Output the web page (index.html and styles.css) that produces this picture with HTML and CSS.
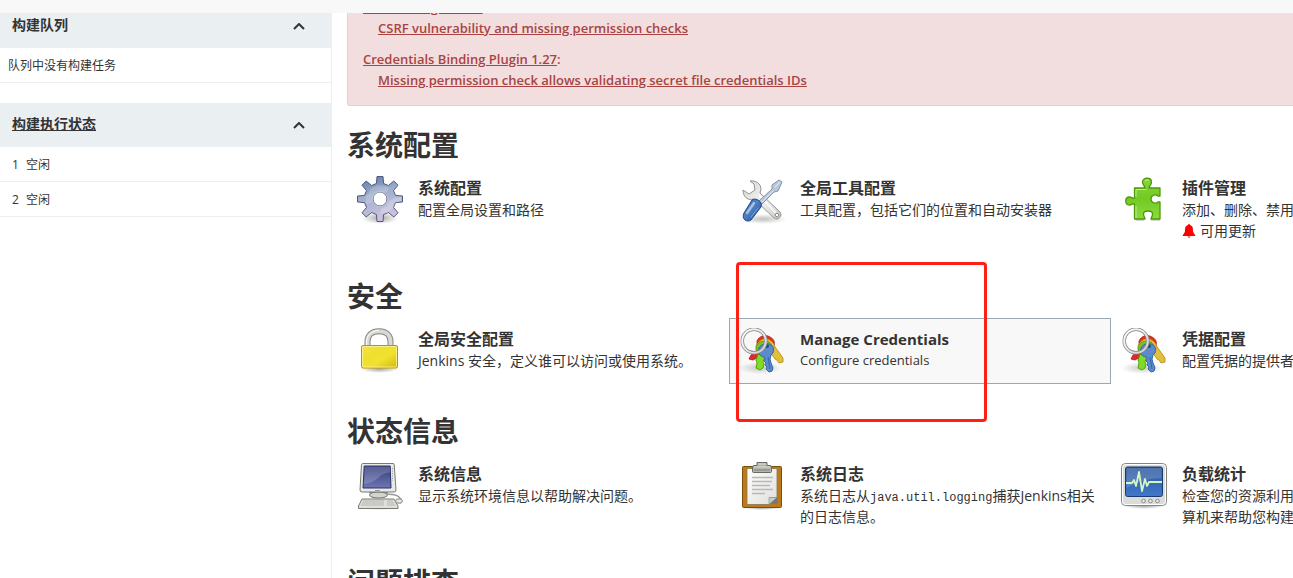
FILE: index.html
```html
<!DOCTYPE html>
<html lang="zh-CN">
<head>
<meta charset="utf-8">
<title>系统管理 [Jenkins]</title>
<link rel="stylesheet" href="styles.css">
</head>
<body>
<svg class="defs" aria-hidden="true">
  <defs>
    <linearGradient id="ring" x1="0" y1="0" x2="1" y2="1"><stop offset="0" stop-color="#fff"/><stop offset="1" stop-color="#cfcfcf"/></linearGradient>
    <radialGradient id="shade"><stop offset="0" stop-color="#000" stop-opacity=".35"/><stop offset="1" stop-color="#000" stop-opacity="0"/></radialGradient>
  </defs>
  <symbol id="keys" viewBox="0 0 48 48">
    <ellipse cx="21" cy="40" rx="21" ry="6" fill="url(#shade)" opacity=".6"/>
    <path d="M20 22l-8 5-2 4 4 1 11-6z" fill="#e0282e" stroke="#b81414" stroke-width=".8"/>
    <path d="M18 13c2-5 8-7 13-4 4 2 5 5 4 9l-6-3-11 4z" fill="#d8391f" stroke="#b81414" stroke-width=".8"/>
    <path d="M30 18l4-2 10 14v4l-4 1-2-3-2-1-2-3-5-6z" fill="#e3c03c" stroke="#b8921a" stroke-width=".9"/>
    <path d="M18 16c3-5 9-7 14-3 3 2 4 5 2 9l-5-5-10 3z" fill="#f0c637" stroke="#c17d11" stroke-width=".6"/>
    <path d="M17 18c3-5 9-6 13-4 3 2 4 5 3 8l-9 5-7-5z" fill="#73c91f" stroke="#4e9a06" stroke-width=".8"/>
    <path d="M19 26l-2 6 1 3-1 5 4 2 3-2 1-4-1-2 2-6z" fill="#7fdc24" stroke="#4e9a06" stroke-width=".9"/>
    <path d="M20 20c2-4 8-6 12-3 4 3 3 8 0 10l-1 4 1 4 2 5-1 3-3 1-3-3 1-2-2-2 1-2-2-2 1-2-1-2c-5-1-7-5-5-9z" fill="#5a8bcd" stroke="#3465a4"/>
    <path d="M29 29l2 12" stroke="#3465a4" stroke-width="1"/>
    <ellipse cx="27" cy="18" rx="3" ry="2" fill="#284f73"/>
    <circle cx="15" cy="13" r="11.8" fill="none" stroke="#858585" stroke-width="3.400"/>
    <circle cx="15" cy="13" r="11.8" fill="none" stroke="url(#ring)" stroke-width="2"/>
  </symbol>
</svg>

<div class="topbar"></div>
<div class="page">
  <aside class="side-panel">
    <section class="pane">
      <header class="pane-header">
        <h2 class="pane-title">构建队列</h2>
        <button class="collapse" aria-label="收起构建队列"><svg viewBox="0 0 12 7"><path d="M1 6l5-5 5 5"/></svg></button>
      </header>
      <p class="pane-row">队列中没有构建任务</p>
    </section>
    <section class="pane">
      <header class="pane-header">
        <h2 class="pane-title"><a href="#computer">构建执行状态</a></h2>
        <button class="collapse" aria-label="收起构建执行状态"><svg viewBox="0 0 12 7"><path d="M1 6l5-5 5 5"/></svg></button>
      </header>
      <table class="executors">
        <tr><td class="number">1</td><td>空闲</td></tr>
        <tr><td class="number">2</td><td>空闲</td></tr>
      </table>
    </section>
  </aside>

  <main class="main-panel">
    <dl class="alert">
      <dt><a href="#docker">Docker Plugin 1.1.6</a>:</dt>
      <dd><a href="#csrf">CSRF vulnerability and missing permission checks</a></dd>
      <dt><a href="#binding">Credentials Binding Plugin 1.27</a>:</dt>
      <dd><a href="#permission">Missing permission check allows validating secret file credentials IDs</a></dd>
    </dl>

    <section class="category">
      <h1 class="category-title">系统配置</h1>
      <div class="items">
        <a class="item" href="#configure">
          <svg class="icon" viewBox="0 0 48 48">
            <defs><linearGradient id="gear" x1="0" y1="0" x2=".3" y2="1"><stop offset="0" stop-color="#5670a2"/><stop offset=".45" stop-color="#9dafcd"/><stop offset="1" stop-color="#cdc2df"/></linearGradient></defs>
            <ellipse cx="23" cy="41" rx="18" ry="6" fill="url(#shade)"/>
            <g transform="translate(23 22)">
              <path fill="url(#gear)" stroke="#515a78" stroke-linejoin="round" fill-rule="evenodd" d="M-3.6-15.5L-3-22.5H3L3.6-15.5 8.4-13.5 13.8-18 18-13.8 13.5-8.4 15.5-3.6 22.5-3V3L15.5 3.6 13.5 8.4 18 13.8 13.8 18 8.4 13.5 3.6 15.5 3 22.5H-3L-3.6 15.5-8.4 13.5-13.8 18-18 13.8-13.5 8.4-15.5 3.6-22.5 3V-3L-15.5-3.6-13.5-8.4-18-13.8-13.8-18-8.4-13.5zM7 0A7 7 0 1 0-7 0 7 7 0 1 0 7 0z"/>
              <path d="M-14-3l3-3 2-5 7-3 5 1 6 1-2 5-6 1A7 7 0 0 0-7 0l-2 4-5 1z" fill="#fff" opacity=".18"/>
              <path d="M9 2l5-3 7-1v4l-6 2-2 5-6 5-7 1 1-5 6-3z" fill="#fff" opacity=".22"/>
              <circle r="7.5" fill="none" stroke="#eef0f7" stroke-width=".8" opacity=".6"/>
            </g>
          </svg>
          <dl class="item-text"><dt>系统配置</dt><dd>配置全局设置和路径</dd></dl>
        </a>
        <a class="item" href="#tools">
          <svg class="icon" viewBox="0 0 48 48">
            <defs><linearGradient id="steel" x1="0" y1="0" x2="1" y2="1"><stop offset="0" stop-color="#d2d2d0"/><stop offset=".5" stop-color="#f3f3f2"/><stop offset="1" stop-color="#c9cac7"/></linearGradient>
            <linearGradient id="handle" x1="0" y1="0" x2="1" y2="1"><stop offset="0" stop-color="#3465a4"/><stop offset=".45" stop-color="#4f80c4"/><stop offset="1" stop-color="#204a87"/></linearGradient></defs>
            <ellipse cx="24" cy="42" rx="24" ry="5" fill="url(#shade)" opacity=".7"/>
            <path d="M11 4c6-1 11 3 11 8l-1 4 20 19c3 4-2 9-6 6L15 22C9 24 4 20 4 13l6 4 6-4-1-6z" fill="url(#steel)" stroke="#92948f" stroke-linejoin="round"/>
            <path d="M20 18l17 18" stroke="#fff" stroke-width="2" opacity=".7"/>
            <circle cx="38" cy="38" r="1.800" fill="#fff" stroke="#888"/>
            <path d="M20 24L33 12V8l7-5 3 2-4 9-4 1-12 12z" fill="#b9c9da" stroke="#8393a7" stroke-linejoin="round"/>
            <path d="M36 10l5-5M23 25l11-11" stroke="#e3ebf3" stroke-width="1"/>
            <path d="M13 23c4-3 11 2 9 7L12 43c-4 3-10-1-7-7z" fill="url(#handle)" stroke="#204a87"/>
            <path d="M15 26L8 36" stroke="#a4c1e8" stroke-width="2.500" stroke-linecap="round"/>
            <path d="M19 31l-7 9" stroke="#7ea5da" stroke-width="1" stroke-linecap="round"/>
          </svg>
          <dl class="item-text"><dt>全局工具配置</dt><dd>工具配置，包括它们的位置和自动安装器</dd></dl>
        </a>
        <a class="item" href="#plugins">
          <svg class="icon" viewBox="0 0 48 48">
            <defs><linearGradient id="puzzle" x1="0" y1="0" x2="0" y2="1"><stop offset="0" stop-color="#88d63c"/><stop offset=".5" stop-color="#73c923"/><stop offset="1" stop-color="#8bdc3f"/></linearGradient></defs>
            <path d="M15 43h8M30 43h9" stroke="#aaa" stroke-width="2" opacity=".5"/>
            <path d="M13.500 11H24c0-2-2.500-3-2.500-6 0-5 9-5 9 0 0 3-2.500 4-2.500 6h11v8h-2c-2-2-7-1-7 3s5 5 7 3h2v17H30c0-2 1.500-2 1.500-5 0-4-9-4-9 0 0 3 1.500 3 1.500 5H13.500V27c-2-1-3 1-5 1-5 0-5-8 0-8 2 0 3 2 5 1z" fill="url(#puzzle)" stroke="#4e9a06" stroke-width="1.300" stroke-linejoin="round"/>
            <path d="M15 20v-7.500h10M15 41V29M24 4c1-1.500 3-1.500 4-.5" fill="none" stroke="#c6f09a" stroke-width=".9"/>
          </svg>
          <dl class="item-text"><dt>插件管理</dt><dd>添加、删除、禁用或启用 Jenkins 功能的插件。</dd>
          <dd class="update"><svg class="bell" viewBox="0 0 14 14"><path d="M7 0c1 0 1 1 1 1 3 1 3 3 3 6 0 2 2 3 2.500 5h-13C1 10 3 9 3 7c0-3 0-5 3-6 0 0 0-1 1-1zM5.500 12.500h3Q7 15 5.500 12.500z"/></svg>可用更新</dd></dl>
        </a>
      </div>
    </section>

    <section class="category">
      <h1 class="category-title">安全</h1>
      <div class="items">
        <a class="item" href="#security">
          <svg class="icon" viewBox="0 0 48 48">
            <defs><linearGradient id="brass" x1="0" y1="0" x2="1" y2="1"><stop offset="0" stop-color="#f6e04a"/><stop offset=".4" stop-color="#eee02c"/><stop offset=".6" stop-color="#f1e22f"/><stop offset="1" stop-color="#d5b60c"/></linearGradient></defs>
            <ellipse cx="22.500" cy="41" rx="19" ry="4" fill="url(#shade)"/>
            <path d="M10.500 19v-5.500C10.500 7 15 3.200 22 3.200S33.500 7 33.500 13.500V19" fill="none" stroke="#858782" stroke-width="6"/>
            <path d="M10.500 19v-5.500C10.500 7 15 3.200 22 3.200S33.500 7 33.500 13.500V19" fill="none" stroke="#d7d9d4" stroke-width="4"/>
            <path d="M9.500 18v-5C10 7 15 2.500 22 2.500" fill="none" stroke="#fff" stroke-width="1"/>
            <rect x="4.500" y="17.500" width="36" height="22.500" rx="1.500" fill="url(#brass)" stroke="#b59800"/>
            <rect x="5.500" y="18.500" width="34" height="20.500" rx="1" fill="none" stroke="#fbf3a0" stroke-width=".8"/>
          </svg>
          <dl class="item-text"><dt>全局安全配置</dt><dd>Jenkins 安全，定义谁可以访问或使用系统。</dd></dl>
        </a>
        <a class="item active" href="#credentials">
          <svg class="icon"><use href="#keys"/></svg>
          <dl class="item-text latin"><dt>Manage Credentials</dt><dd>Configure credentials</dd></dl>
          <span class="highlight"></span>
        </a>
        <a class="item" href="#providers">
          <svg class="icon"><use href="#keys"/></svg>
          <dl class="item-text"><dt>凭据配置</dt><dd>配置凭据的提供者和类型</dd></dl>
        </a>
      </div>
    </section>

    <section class="category">
      <h1 class="category-title">状态信息</h1>
      <div class="items">
        <a class="item" href="#info">
          <svg class="icon" viewBox="0 0 48 48">
            <defs><linearGradient id="screen" x1="0" y1="0" x2="0" y2="1"><stop offset="0" stop-color="#343a79"/><stop offset="1" stop-color="#6e77b3"/></linearGradient></defs>
            <ellipse cx="22" cy="44" rx="21" ry="3" fill="url(#shade)"/>
            <path d="M12 28h19l-3 6H15z" fill="#a9aca5" stroke="#777a73"/>
            <ellipse cx="21.500" cy="32" rx="9" ry="3" fill="#d3d5cf" stroke="#777a73"/>
            <path d="M30 31c6 1 9 0 12 3s3 5 1 6" fill="none" stroke="#999" stroke-width="1.400"/>
            <path d="M6 .500h30q1 0 1.200 1L39 27q0 2-2 2H5q-2 0-2-2L4.500 1.500Q5 .500 6 .500z" fill="#e9eae6" stroke="#777a73"/>
            <path d="M7.200 3h26L34 25H6z" fill="url(#screen)" stroke="#27306d"/>
            <path d="M7.500 3.500H33l.2 6Q25 10 21 15 16 20 7 21z" fill="#fff" opacity=".18"/>
            <path d="M35.500 5v13" stroke="#999" stroke-dasharray="1 1.500"/><path d="M18 27.500h5" stroke="#999"/>
            <path d="M5 36h32l4 7v2.500H1.500V43z" fill="#dfe0dc" stroke="#777a73" stroke-linejoin="round"/>
            <path d="M6 38h21M5 40h22M4 42h23M30 38h6M30 40h7M30 42h8" stroke="#b4b6b1" stroke-width="1"/>
            <ellipse cx="42" cy="38" rx="3.500" ry="2.200" fill="#e5e6e2" stroke="#888"/>
          </svg>
          <dl class="item-text"><dt>系统信息</dt><dd>显示系统环境信息以帮助解决问题。</dd></dl>
        </a>
        <a class="item" href="#log">
          <svg class="icon" viewBox="0 0 48 48">
            <defs><linearGradient id="paper" x1="0" y1="0" x2="1" y2="1"><stop offset="0" stop-color="#fff"/><stop offset="1" stop-color="#dededc"/></linearGradient></defs>
            <ellipse cx="23" cy="45" rx="19" ry="2" fill="url(#shade)"/>
            <rect x="3.500" y="3.500" width="39" height="41" rx="1" fill="#bd7a1c" stroke="#7d4c05"/>
            <path d="M8 5.500h30v29l-7 7H8z" fill="url(#paper)" stroke="#8a734e" stroke-width=".8"/>
            <path d="M31 41v-6.500h7.500V41z" fill="#777974"/><path d="M30 34.500h8l-8 7z" fill="#c9cbc6" stroke="#777" stroke-width=".5"/>
            <path d="M13 14.500h21M13 18.500h20M13 22.500h18M13 26.500h21M13 30.500h13" stroke="#b8b8b5" stroke-width="1.400"/>
            <path d="M13.500 4q0-1.500 1.500-1.500h3V-.5h10v3h3q1.500 0 1.500 1.500v4.500q0 1-1 1h-17q-1 0-1-1z" fill="#b2b5ac" stroke="#686b62"/>
            <path d="M15 4h16M19 1h8" stroke="#dcded8"/><path d="M15 7h16" stroke="#92958b" stroke-width="1.500"/>
          </svg>
          <dl class="item-text"><dt>系统日志</dt><dd>系统日志从<code>java.util.logging</code>捕获Jenkins相关的日志信息。</dd></dl>
        </a>
        <a class="item" href="#load">
          <svg class="icon" viewBox="0 0 48 48">
            <defs><linearGradient id="blue" x1="0" y1="0" x2="0" y2="1"><stop offset="0" stop-color="#2c579b"/><stop offset="1" stop-color="#3f78cb"/></linearGradient></defs>
            <ellipse cx="23" cy="43" rx="21" ry="3" fill="url(#shade)"/>
            <rect x=".5" y=".5" width="45" height="42" rx="4" fill="#dcddd9" stroke="#82847f"/>
            <rect x="1.500" y="1.500" width="43" height="40" rx="3" fill="none" stroke="#fff"/>
            <rect x="4.500" y="4" width="37" height="29.500" rx="2" fill="url(#blue)" stroke="#173b72"/>
            <path d="M5.500 5h35v10Q22 15 5.500 25z" fill="#fff" opacity=".17"/>
            <path d="M5 20h6l2-3 2 6 3-14 3 19 3-12 2 7 2-4h13" fill="none" stroke="#d5f5c5" stroke-width="1.800" stroke-linejoin="round"/>
            <g fill="#eee" stroke="#888"><circle cx="22.500" cy="38" r="1.800"/><circle cx="29.500" cy="38" r="1.800"/><circle cx="36.500" cy="38" r="1.800"/></g>
          </svg>
          <dl class="item-text"><dt>负载统计</dt><dd>检查您的资源利用情况，看看是否需要更多的计算机来帮助您构建。</dd></dl>
        </a>
      </div>
    </section>

    <section class="category">
      <h1 class="category-title">问题排查</h1>
    </section>
  </main>
</div>
</body>
</html>
```
FILE: styles.css
```css
* { box-sizing: border-box; }
body {
  margin: 0;
  height: 100vh;
  display: flex;
  flex-direction: column;
  overflow: hidden;
  background: #fff;
  color: #333;
  font: 14px/21px "Open Sans", "Noto Sans CJK SC", sans-serif;
}
h1, h2, p, dl, dd { margin: 0; }
a { color: inherit; }
.defs { position: absolute; width: 0; height: 0; }

.topbar { flex: none; height: 13px; background: #f8f8f8; }
.page { flex: 1; min-height: 0; display: flex; overflow: hidden; }

.side-panel {
  flex: none;
  width: 332px;
  border-right: 1px solid #eaeff2;
  font-size: 12px;
}
.pane { margin-bottom: 20px; }
.pane:first-child { margin-top: -9px; }
.pane-header {
  display: flex;
  align-items: center;
  justify-content: space-between;
  height: 44px;
  padding: 0 24px 4px 12px;
  background: #eaeff2;
}
.pane-title { font-size: 14px; line-height: 21px; font-weight: 700; }
.collapse {
  display: flex;
  padding: 4px 2px 0;
  border: 0;
  background: none;
}
.collapse svg { width: 12px; height: 7px; fill: none; stroke: #333; stroke-width: 2; }
.pane-row { padding: 7px 8px 6px; border-bottom: 1px solid #eaeff2; }
.executors { width: 100%; border-spacing: 0; }
.executors td { height: 35px; padding: 0; border-bottom: 1px solid #eaeff2; }
.executors .number { width: 26px; padding-left: 12px; }

.main-panel { flex: 1; min-width: 0; padding-left: 15px; overflow: hidden; }
.alert {
  margin-top: -27px;
  padding: 10px 15px 14px;
  border: 1px solid #ebccd1;
  border-right: 0;
  border-radius: 3px 0 0 3px;
  background: #f2dede;
  color: #a94442;
  font-size: 13px;
  font-weight: 600;
}
.alert dt + dd { padding-left: 15px; }
.alert dd + dt { margin-top: 10px; }

.category { margin-top: 27px; }
.alert + .category { margin-top: 19px; }
.category-title { margin-bottom: 2px; font-size: 28px; line-height: 40px; font-weight: 700; }
.items { display: grid; grid-template-columns: repeat(3, minmax(382px, 1fr)); }
.item {
  position: relative;
  display: flex;
  gap: 13px;
  padding: 9px 9px 7px;
  border: 1px solid transparent;
  text-decoration: none;
}
.item.active { border-color: #98a9b3; background: #f8f8f8; }
.icon { flex: none; width: 48px; height: 48px; overflow: visible; }
.item-text { flex: 1; min-width: 0; }
.item-text dt { font-size: 16px; line-height: 22px; font-weight: 700; }
.item-text.latin { font-size: 13px; }
.item-text.latin dt { font-size: 15px; }
.item-text code { font: 12px "Liberation Mono", monospace; }
.update { display: flex; align-items: center; gap: 4px; }
.bell { width: 14px; height: 14px; fill: #f00; }
.highlight {
  position: absolute;
  z-index: 1;
  left: 6px;
  top: -57px;
  width: 251px;
  height: 160px;
  border: 3px solid #ff2015;
  border-radius: 4px;
}
```
